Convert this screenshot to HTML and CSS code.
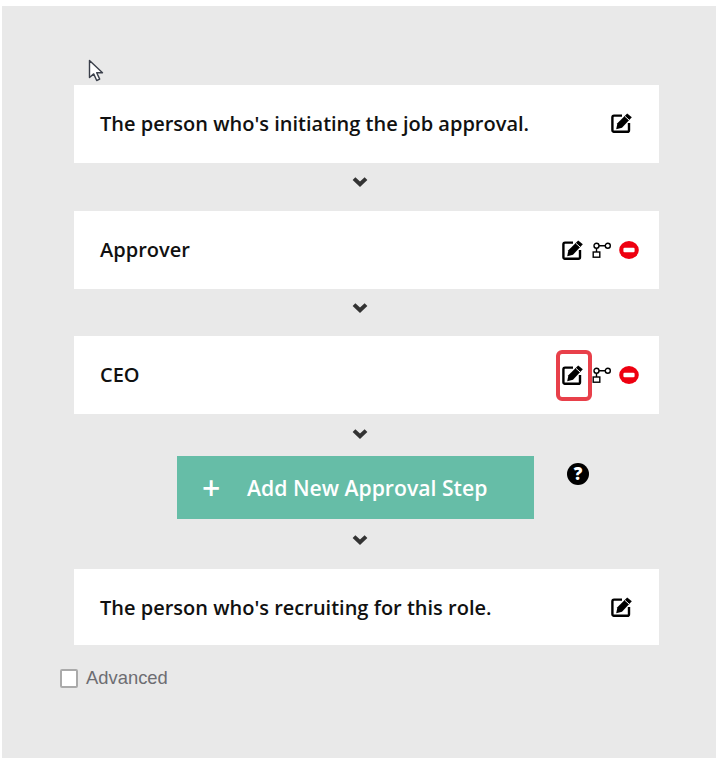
FILE: index.html
```html
<!DOCTYPE html>
<html lang="en">
<head>
<meta charset="utf-8">
<title>Approval Steps</title>
<link rel="stylesheet" href="styles.css">
</head>
<body>
<svg class="defs" width="0" height="0" aria-hidden="true">
  <symbol id="edit" viewBox="0 0 21 20" preserveAspectRatio="none">
    <path d="M11 2.6H3.2A1.6 1.6 0 0 0 1.4 4.2v13a1.6 1.6 0 0 0 1.8 1.6h13.2a1.6 1.6 0 0 0 1.6-1.6V10" fill="none" stroke="#000" stroke-width="2.4"/>
    <path d="M16.2 0.4l4.6 3.8-9.8 10.6-5.8 1.4 1.2-6z" fill="#000"/>
    <path d="M14 3.4l4 3.6" stroke="#fff" stroke-width="1"/>
  </symbol>
  <symbol id="branch" viewBox="0 0 19 16">
    <circle cx="4.5" cy="3.8" r="2.5" fill="#fff" stroke="#000" stroke-width="1.4"/>
    <circle cx="15.8" cy="3.8" r="2.5" fill="#fff" stroke="#000" stroke-width="1.4"/>
    <path d="M7 3.8h6.3M4.5 6.3v3.7" fill="none" stroke="#000" stroke-width="1.4"/>
    <rect x="1.2" y="10" width="6.6" height="5.2" fill="#fff" stroke="#000" stroke-width="1.4"/>
  </symbol>
  <symbol id="remove" viewBox="0 0 20 18">
    <ellipse cx="10" cy="9" rx="9.8" ry="9" fill="#ee0010"/>
    <rect x="4.4" y="6.8" width="11.2" height="4.4" rx="1.2" fill="#fff"/>
  </symbol>
  <symbol id="chevron" viewBox="0 0 16 12">
    <path d="M2 2.6l6 5.6 6-5.6" fill="none" stroke="#333" stroke-width="4"/>
  </symbol>
</svg>

<main class="panel">
  <svg class="cursor" width="17" height="24" viewBox="0 0 17 24" aria-hidden="true">
    <path d="M1.5 1.5v17l4.2-3.6 3 6.6 3-1.4-3-6.4h5.8z" fill="#fff" stroke="#3a3f4a" stroke-width="1.4" stroke-linejoin="round"/>
  </svg>

  <section class="card card-first">
    <span class="card-title">The person who's initiating the job approval.</span>
    <div class="actions">
      <svg class="icon-edit"><use href="#edit"/></svg>
    </div>
  </section>
  <div class="arrow"><svg class="icon-chevron"><use href="#chevron"/></svg></div>

  <section class="card card-second">
    <span class="card-title">Approver</span>
    <div class="actions">
      <svg class="icon-edit"><use href="#edit"/></svg>
      <svg class="icon-branch"><use href="#branch"/></svg>
      <svg class="icon-remove"><use href="#remove"/></svg>
    </div>
  </section>
  <div class="arrow"><svg class="icon-chevron"><use href="#chevron"/></svg></div>

  <section class="card card-third">
    <span class="card-title">CEO</span>
    <div class="actions">
      <span class="highlighted">
        <svg class="icon-edit"><use href="#edit"/></svg>
      </span>
      <svg class="icon-branch"><use href="#branch"/></svg>
      <svg class="icon-remove"><use href="#remove"/></svg>
    </div>
  </section>
  <div class="arrow arrow-short"><svg class="icon-chevron"><use href="#chevron"/></svg></div>

  <div class="add-row">
    <button class="add-button" type="button">
      <span class="plus">+</span>
      <span>Add New Approval Step</span>
    </button>
    <span class="help">?</span>
  </div>
  <div class="arrow arrow-after"><svg class="icon-chevron"><use href="#chevron"/></svg></div>

  <section class="card card-last">
    <span class="card-title">The person who's recruiting for this role.</span>
    <div class="actions">
      <svg class="icon-edit"><use href="#edit"/></svg>
    </div>
  </section>

  <label class="advanced">
    <span class="checkbox"></span>
    <span>Advanced</span>
  </label>
</main>
</body>
</html>
```

FILE: styles.css
```css
*,
*::before,
*::after {
  box-sizing: border-box;
}

html,
body {
  margin: 0;
  background: #fff;
}

body {
  padding: 6px 6px 6px 2px;
  font-family: "Open Sans", sans-serif;
}

.defs {
  position: absolute;
}

.panel {
  position: relative;
  height: 752px;
  padding: 79px 57px 0 72px;
  background: #e9e9e9;
}

.cursor {
  position: absolute;
  left: 86px;
  top: 53px;
}

.card {
  display: flex;
  align-items: center;
  justify-content: space-between;
  height: 78px;
  padding: 0 20px 2px 26px;
  background: #fff;
}

.card-first {
  padding-right: 27px;
}

.card-second {
  padding-bottom: 0;
}

.card-third .actions {
  margin-top: 1px;
}

.card-last {
  height: 76px;
  padding-right: 27px;
  padding-bottom: 0;
}

.card-title {
  font-size: 20px;
  font-weight: 600;
  color: #111;
}

.actions {
  display: flex;
  align-items: center;
  gap: 8px;
}

.icon-edit {
  display: block;
  width: 21px;
  height: 20px;
}

.icon-branch {
  display: block;
  width: 19px;
  height: 16px;
  margin: 1px 0 0 1px;
}

.icon-remove {
  display: block;
  width: 20px;
  height: 18px;
}

.highlighted {
  position: relative;
  display: block;
}

.highlighted::after {
  content: "";
  position: absolute;
  left: -6px;
  top: -15px;
  width: 36px;
  height: 51px;
  border: 4px solid #e8404a;
  border-radius: 6px;
}

.arrow {
  display: flex;
  align-items: center;
  justify-content: center;
  height: 47.5px;
  padding: 0 13px 9px 0;
}

.arrow-short {
  height: 42px;
  padding-bottom: 3px;
}

.arrow-after {
  height: 50px;
  padding-bottom: 9px;
}

.icon-chevron {
  display: block;
  width: 16px;
  height: 12px;
}

.add-row {
  position: relative;
  height: 63px;
  padding-left: 103px;
}

.add-button {
  display: flex;
  align-items: center;
  width: 357px;
  height: 63px;
  padding: 0 0 0 25px;
  border: 0;
  background: #66bda7;
  color: #fff;
  font-family: "Open Sans", sans-serif;
  font-size: 21.2px;
  font-weight: 600;
}

.plus {
  width: 45px;
  font-size: 32px;
  line-height: 1;
  text-align: left;
}

.help {
  position: absolute;
  left: 493px;
  top: 7px;
  width: 22px;
  height: 22px;
  border-radius: 50%;
  background: #000;
  color: #fff;
  font-size: 17px;
  font-weight: 800;
  line-height: 22px;
  text-align: center;
}

.advanced {
  display: flex;
  align-items: center;
  gap: 8px;
  margin: 22px 0 0 -14px;
  color: #6d6d72;
  font-family: "Liberation Sans", sans-serif;
  font-size: 18.4px;
}

.checkbox {
  display: block;
  width: 18px;
  height: 19px;
  border: 2px solid #aaa;
  border-radius: 2px;
  background: #fff;
}
```
